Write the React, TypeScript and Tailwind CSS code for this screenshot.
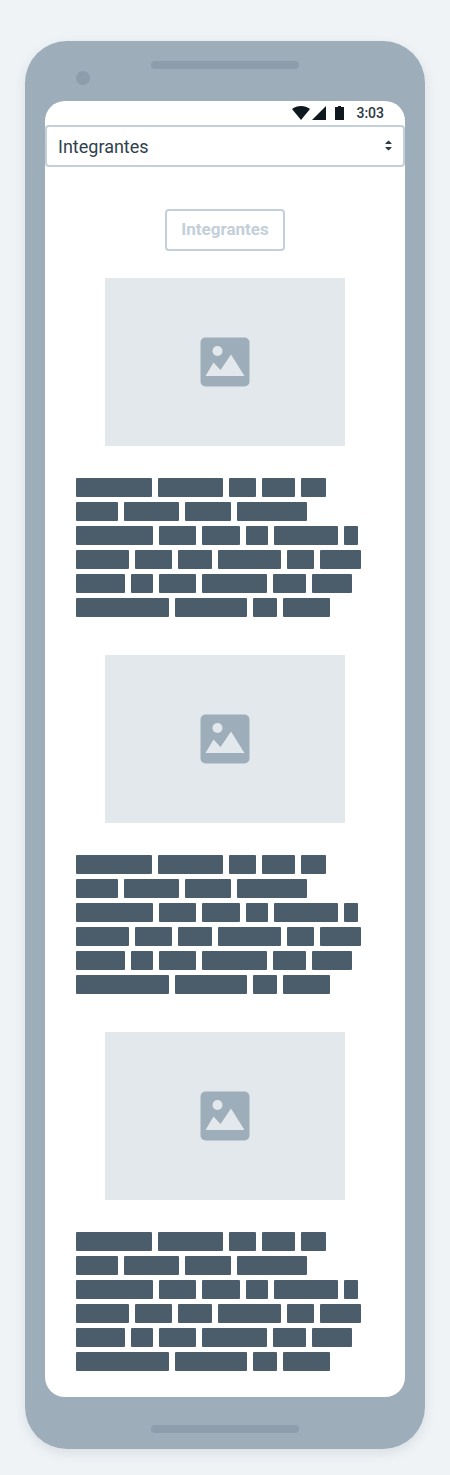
import React from "react";

const paragraph: number[][] = [
  [76, 65, 27, 33, 25],
  [42, 55, 46, 70],
  [77, 37, 38, 22, 64, 14],
  [53, 37, 34, 63, 27, 41],
  [49, 22, 37, 65, 33, 40],
  [93, 72, 24, 47],
];

function StatusBar() {
  return (
    <header className="flex h-6 items-center justify-end pr-[21px] text-[#10181f]">
      <svg className="h-[14px] w-[18px]" viewBox="0 0 18 14" fill="currentColor" aria-hidden="true">
        <path d="M0 3C2.500 1 5.600 0 9 0s6.500 1 9 3L9 14Z" />
      </svg>
      <svg className="ml-[2px] h-[14px] w-[14px]" viewBox="0 0 14 14" fill="currentColor" aria-hidden="true">
        <path d="M14 0v14H0Z" />
      </svg>
      <svg className="ml-[9px] h-[14px] w-[9px]" viewBox="0 0 9 14" fill="currentColor" aria-hidden="true">
        <path d="M3 0h3v1h3v13H0V1h3Z" />
      </svg>
      <time className="ml-3 text-sm leading-6 font-medium text-[#2c3742]">3:03</time>
    </header>
  );
}

function PageSelect() {
  return (
    <div className="relative">
      <select
        aria-label="Página"
        defaultValue="Integrantes"
        className="block h-[42px] w-full appearance-none rounded-[4px] border-2 border-[#c3cfd9] bg-white px-[11px] text-[18px] text-[#2f3f4d]"
      >
        <option>Integrantes</option>
      </select>
      <svg
        className="pointer-events-none absolute top-[15px] right-[13px] h-[11px] w-[7px]"
        viewBox="0 0 7 11"
        fill="#2c3b47"
        aria-hidden="true"
      >
        <path d="M3.500.4 6.500 3.200V4H.5V3.200ZM.5 7h6v.8L3.500 10.600.5 7.800Z" />
      </svg>
    </div>
  );
}

function ImagePlaceholder() {
  return (
    <div className="mx-auto flex h-[168px] w-2/3 items-center justify-center bg-[#e2e8ec]">
      <svg className="h-[50px] w-[50px]" viewBox="0 0 50 50" aria-hidden="true">
        <rect x="0.500" y="0.500" width="49" height="49" rx="5" fill="#9dadb9" />
        <circle cx="17.500" cy="14" r="5" fill="#e2e8ec" />
        <path d="M5.500 39 13.500 25.500 20.500 33 31 17.500 44.500 39Z" fill="#e2e8ec" />
      </svg>
    </div>
  );
}

function TextPlaceholder() {
  return (
    <div className="mt-8 flex flex-col gap-[5px] pl-[31px]">
      {paragraph.map((line, i) => (
        <div key={i} className="flex gap-[6px]">
          {line.map((width, j) => (
            <span key={j} className="h-[19px] rounded-[1px] bg-[#4b5c6a]" style={{ width }} />
          ))}
        </div>
      ))}
    </div>
  );
}

export default function App() {
  return (
    <div className="min-h-screen bg-[#eff3f6] px-[25px] pt-[41px] pb-[26px] font-['Roboto',sans-serif]">
      <div className="relative rounded-[42px] bg-[#9dadb9] px-5 pb-4 shadow-[0_4px_12px_rgba(60,75,90,0.12)]">
        <span className="absolute top-[30px] left-[51px] size-[14px] rounded-full bg-[#8e9dac]" />
        <div className="flex h-[60px] justify-center pt-5">
          <span className="h-2 w-[148px] rounded-full bg-[#8e9dac]" />
        </div>
        <div className="overflow-hidden rounded-[20px] bg-white pb-[26px]">
          <StatusBar />
          <PageSelect />
          <main>
            <div className="flex justify-center pt-[42px] pb-[27px]">
              <button
                type="button"
                className="h-[42px] w-[120px] rounded-[4px] border-2 border-[#c3cfd9] text-[17px] font-bold text-[#c3cfd9]"
              >
                Integrantes
              </button>
            </div>
            <div className="flex flex-col gap-[38px]">
              {[0, 1, 2].map((id) => (
                <article key={id}>
                  <ImagePlaceholder />
                  <TextPlaceholder />
                </article>
              ))}
            </div>
          </main>
        </div>
        <div className="flex justify-center pt-7">
          <span className="h-2 w-[148px] rounded-full bg-[#8e9dac]" />
        </div>
      </div>
    </div>
  );
}
